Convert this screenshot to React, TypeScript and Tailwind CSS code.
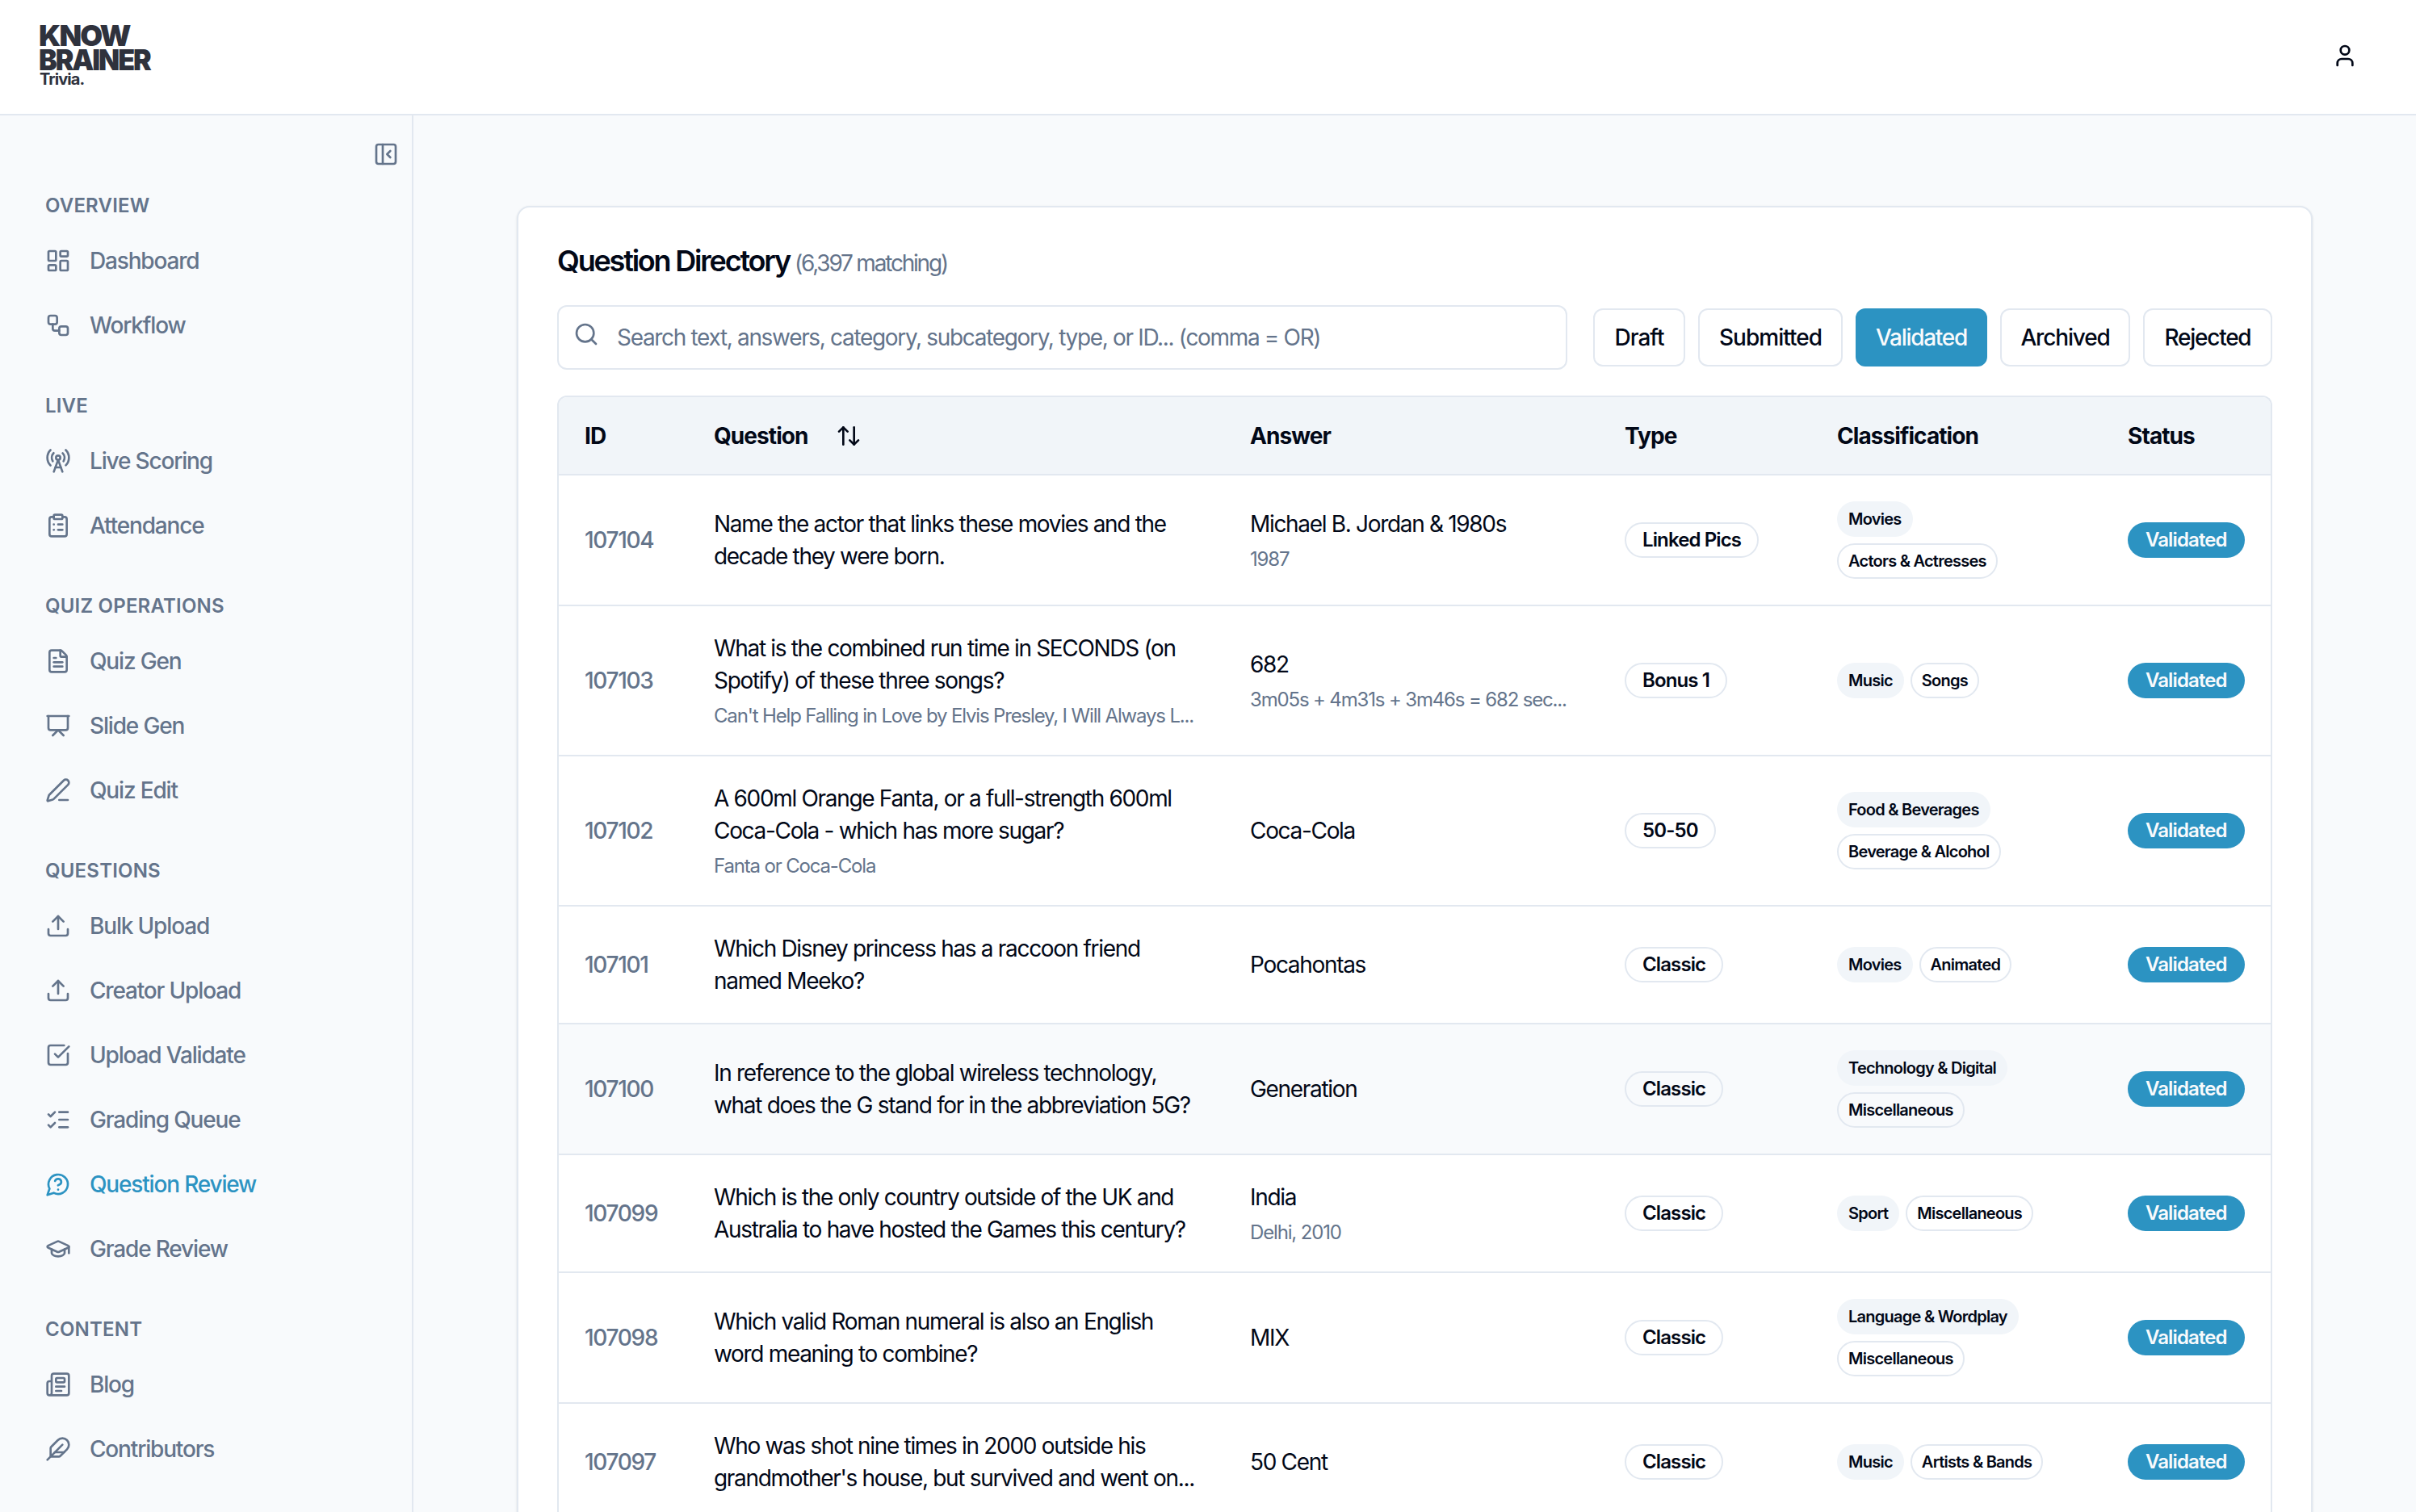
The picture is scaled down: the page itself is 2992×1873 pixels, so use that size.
import React from 'react'
import {
  ArrowUpDown,
  ClipboardList,
  Feather,
  FileText,
  GraduationCap,
  LayoutDashboard,
  ListChecks,
  Newspaper,
  PanelLeftClose,
  PenLine,
  Presentation,
  RadioTower,
  Search,
  Upload,
  User,
  Workflow,
} from 'lucide-react'
import type { LucideIcon } from 'lucide-react'
import { clsx } from 'clsx'

type IconType = LucideIcon | React.FC<{ className?: string }>

interface IconProps {
  className?: string
  children: React.ReactNode
}

const StrokeIcon: React.FC<IconProps> = ({ className, children }) => (
  <svg
    className={className}
    viewBox="0 0 24 24"
    fill="none"
    stroke="currentColor"
    strokeWidth={2}
    strokeLinecap="round"
    strokeLinejoin="round"
  >
    {children}
  </svg>
)

const SquareCheckIcon: React.FC<{ className?: string }> = ({ className }) => (
  <StrokeIcon className={className}>
    <path d="M21 10.5V19a2 2 0 0 1-2 2H5a2 2 0 0 1-2-2V5a2 2 0 0 1 2-2h12.5" />
    <path d="m9 11 3 3L22 4" />
  </StrokeIcon>
)

const ChatQuestionIcon: React.FC<{ className?: string }> = ({ className }) => (
  <StrokeIcon className={className}>
    <path d="M7.9 20A9 9 0 1 0 4 16.1L2 22Z" />
    <path d="M9.09 9a3 3 0 0 1 5.83 1c0 2-3 3-3 3" />
    <path d="M12 17h.01" />
  </StrokeIcon>
)

interface NavItem {
  label: string
  icon: IconType
  active?: boolean
}

const sections: { title: string; items: NavItem[] }[] = [
  {
    title: 'Overview',
    items: [
      { label: 'Dashboard', icon: LayoutDashboard },
      { label: 'Workflow', icon: Workflow },
    ],
  },
  {
    title: 'Live',
    items: [
      { label: 'Live Scoring', icon: RadioTower },
      { label: 'Attendance', icon: ClipboardList },
    ],
  },
  {
    title: 'Quiz Operations',
    items: [
      { label: 'Quiz Gen', icon: FileText },
      { label: 'Slide Gen', icon: Presentation },
      { label: 'Quiz Edit', icon: PenLine },
    ],
  },
  {
    title: 'Questions',
    items: [
      { label: 'Bulk Upload', icon: Upload },
      { label: 'Creator Upload', icon: Upload },
      { label: 'Upload Validate', icon: SquareCheckIcon },
      { label: 'Grading Queue', icon: ListChecks },
      { label: 'Question Review', icon: ChatQuestionIcon, active: true },
      { label: 'Grade Review', icon: GraduationCap },
    ],
  },
  {
    title: 'Content',
    items: [
      { label: 'Blog', icon: Newspaper },
      { label: 'Contributors', icon: Feather },
    ],
  },
]

const filters = [
  { name: 'Draft', className: 'w-[114px] tracking-[-1px]' },
  { name: 'Submitted', className: 'w-[179px] tracking-[-1px]' },
  { name: 'Validated', className: 'w-[163px] tracking-[-1.3px]', active: true },
  { name: 'Archived', className: 'w-[161px] tracking-[-1.17px]' },
  { name: 'Rejected', className: 'w-[160px] tracking-[-1.25px]' },
]

interface Row {
  id: string
  question: string[]
  note?: string
  answer: string
  answerNote?: string
  type: string
  category: string
  subcategory: string
  highlighted?: boolean
}

const rows: Row[] = [
  {
    id: '107104',
    question: ['Name the actor that links these movies and the', 'decade they were born.'],
    answer: 'Michael B. Jordan & 1980s',
    answerNote: '1987',
    type: 'Linked Pics',
    category: 'Movies',
    subcategory: 'Actors & Actresses',
  },
  {
    id: '107103',
    question: ['What is the combined run time in SECONDS (on', 'Spotify) of these three songs?'],
    note: "Can't Help Falling in Love by Elvis Presley, I Will Always L...",
    answer: '682',
    answerNote: '3m05s + 4m31s + 3m46s = 682 sec...',
    type: 'Bonus 1',
    category: 'Music',
    subcategory: 'Songs',
  },
  {
    id: '107102',
    question: ['A 600ml Orange Fanta, or a full-strength 600ml', 'Coca-Cola - which has more sugar?'],
    note: 'Fanta or Coca-Cola',
    answer: 'Coca-Cola',
    type: '50-50',
    category: 'Food & Beverages',
    subcategory: 'Beverage & Alcohol',
  },
  {
    id: '107101',
    question: ['Which Disney princess has a raccoon friend', 'named Meeko?'],
    answer: 'Pocahontas',
    type: 'Classic',
    category: 'Movies',
    subcategory: 'Animated',
  },
  {
    id: '107100',
    question: ['In reference to the global wireless technology,', 'what does the G stand for in the abbreviation 5G?'],
    answer: 'Generation',
    type: 'Classic',
    category: 'Technology & Digital',
    subcategory: 'Miscellaneous',
    highlighted: true,
  },
  {
    id: '107099',
    question: ['Which is the only country outside of the UK and', 'Australia to have hosted the Games this century?'],
    answer: 'India',
    answerNote: 'Delhi, 2010',
    type: 'Classic',
    category: 'Sport',
    subcategory: 'Miscellaneous',
  },
  {
    id: '107098',
    question: ['Which valid Roman numeral is also an English', 'word meaning to combine?'],
    answer: 'MIX',
    type: 'Classic',
    category: 'Language & Wordplay',
    subcategory: 'Miscellaneous',
  },
  {
    id: '107097',
    question: ['Who was shot nine times in 2000 outside his', "grandmother's house, but survived and went on..."],
    answer: '50 Cent',
    type: 'Classic',
    category: 'Music',
    subcategory: 'Artists & Bands',
  },
]

const Logo: React.FC = () => (
  <div className="flex flex-col items-start text-4xl font-black text-[#2f323d]">
    <span className="leading-[30px] tracking-[-1.9px]">KNOW</span>
    <span className="origin-left scale-x-[0.945] leading-[31px] tracking-[-2.2px]">BRAINER</span>
    <span className="ml-px text-xl leading-4 font-bold tracking-[-0.9px]">Trivia.</span>
  </div>
)

const Header: React.FC = () => (
  <header className="flex h-[143px] shrink-0 items-start justify-between border-b-2 border-[#e2e8f0] bg-white pl-12 pr-[72px]">
    <div className="pt-[29px]">
      <Logo />
    </div>
    <User className="mt-[53px] size-8" />
  </header>
)

const Sidebar: React.FC = () => (
  <aside className="w-[512px] shrink-0 border-r-2 border-[#e2e8f0] text-[#64748b]">
    <div className="flex h-21 justify-end pr-4 pt-8">
      <PanelLeftClose className="size-8" />
    </div>
    <nav className="flex flex-col gap-8">
      {sections.map(({ title, items }) => (
        <div key={title}>
          <h2 className="flex h-14 items-center pl-14 text-2xl font-semibold tracking-[0.2px] uppercase">
            {title}
          </h2>
          <ul>
            {items.map(({ label, icon: Icon, active }) => (
              <li
                key={label}
                className={clsx(
                  'flex h-20 items-center gap-[23px] pl-14 text-[28px] font-medium tracking-[-1.17px]',
                  active && 'text-[#2c93c2]'
                )}
              >
                <Icon className="size-8" />
                {label}
              </li>
            ))}
          </ul>
        </div>
      ))}
    </nav>
  </aside>
)

interface BadgeProps {
  variant?: 'outline' | 'secondary' | 'primary'
  small?: boolean
  children: React.ReactNode
}

const Badge: React.FC<BadgeProps> = ({ variant = 'outline', small, children }) => (
  <span
    className={clsx(
      'inline-flex h-11 items-center rounded-full border-2 font-semibold whitespace-nowrap',
      small ? 'px-3 text-xl tracking-[-0.75px]' : 'px-5 text-2xl tracking-[-0.88px]',
      variant === 'outline' && 'border-[#e2e8f0]',
      variant === 'secondary' && 'border-transparent bg-[#f1f5f9]',
      variant === 'primary' && 'border-transparent bg-[#2c93c2] text-[#f8fafc]'
    )}
  >
    {children}
  </span>
)

const Toolbar: React.FC = () => (
  <div className="mt-[35px] flex items-center gap-8">
    <div className="relative flex-1">
      <Search className="absolute left-5 top-5 size-8 text-[#64748b]" />
      <input
        className="block h-20 w-full rounded-xl border-2 border-[#e2e8f0] bg-white pl-[72px] text-[28px] tracking-[-1.33px] placeholder:text-[#64748b]"
        placeholder="Search text, answers, category, subcategory, type, or ID... (comma = OR)"
      />
    </div>
    <div className="flex gap-4">
      {filters.map(({ name, className, active }) => (
        <button
          key={name}
          className={clsx(
            'h-18 rounded-xl border-2 text-[28px] font-medium',
            active ? 'border-[#2c93c2] bg-[#2c93c2] text-[#f8fafc]' : 'border-[#e2e8f0] bg-white',
            className
          )}
        >
          {name}
        </button>
      ))}
    </div>
  </div>
)

const QuestionRow: React.FC<{ row: Row }> = ({ row }) => (
  <tr className={clsx('*:border-b-2 *:border-[#e2e8f0] *:px-8 *:py-8', row.highlighted && 'bg-[#f8fafc]')}>
    <td className="font-medium tracking-[-1.3px] text-[#64748b]">{row.id}</td>
    <td>
      <p className="whitespace-pre">{row.question.join('\n')}</p>
      {row.note && <p className="mt-2 text-2xl leading-8 tracking-[-1.16px] whitespace-nowrap text-[#64748b]">{row.note}</p>}
    </td>
    <td>
      <p>{row.answer}</p>
      {row.answerNote && (
        <p className="mt-2 text-2xl leading-8 tracking-[-1.16px] whitespace-nowrap text-[#64748b]">{row.answerNote}</p>
      )}
    </td>
    <td>
      <div className="flex">
        <Badge>{row.type}</Badge>
      </div>
    </td>
    <td>
      <div className="flex flex-wrap gap-2">
        <Badge variant="secondary" small>{row.category}</Badge>
        <Badge small>{row.subcategory}</Badge>
      </div>
    </td>
    <td>
      <div className="flex">
        <Badge variant="primary">Validated</Badge>
      </div>
    </td>
  </tr>
)

const QuestionTable: React.FC = () => (
  <div className="mt-8 overflow-hidden rounded-t-xl border-2 border-b-0 border-[#e2e8f0]">
    <table className="w-full table-fixed border-separate border-spacing-0 text-[28px] leading-10 tracking-[-1.32px]">
      <colgroup>
        <col className="w-[160px]" />
        <col className="w-[664px]" />
        <col className="w-[464px]" />
        <col className="w-[263px]" />
        <col className="w-[360px]" />
        <col />
      </colgroup>
      <thead>
        <tr className="h-[97px] bg-[#f1f5f9] text-left tracking-[-0.92px] *:border-b-2 *:border-[#e2e8f0] *:px-8 *:font-bold">
          <th>ID</th>
          <th>
            <div className="flex items-center gap-[34px]">
              Question
              <ArrowUpDown className="size-8" />
            </div>
          </th>
          <th>Answer</th>
          <th>Type</th>
          <th>Classification</th>
          <th>Status</th>
        </tr>
      </thead>
      <tbody>
        {rows.map((row) => (
          <QuestionRow key={row.id} row={row} />
        ))}
      </tbody>
    </table>
  </div>
)

export default function App() {
  return (
    <div className="flex h-[1873px] w-[2992px] flex-col overflow-hidden bg-[#f8fafc] font-['Inter',sans-serif] text-[#020817]">
      <Header />
      <div className="flex min-h-0 flex-1">
        <Sidebar />
        <main className="flex-1 px-32 pt-28">
          <section className="min-h-[1700px] rounded-2xl border-2 border-[#e2e8f0] bg-white px-12 pt-[46px] shadow-sm">
            <h1 className="flex h-10 items-baseline gap-1.5 text-4xl leading-10 font-semibold tracking-[-2.2px]">
              Question Directory
              <span className="text-[28px] font-normal tracking-[-2.2px] text-[#64748b]">(6,397 matching)</span>
            </h1>
            <Toolbar />
            <QuestionTable />
          </section>
        </main>
      </div>
    </div>
  )
}
